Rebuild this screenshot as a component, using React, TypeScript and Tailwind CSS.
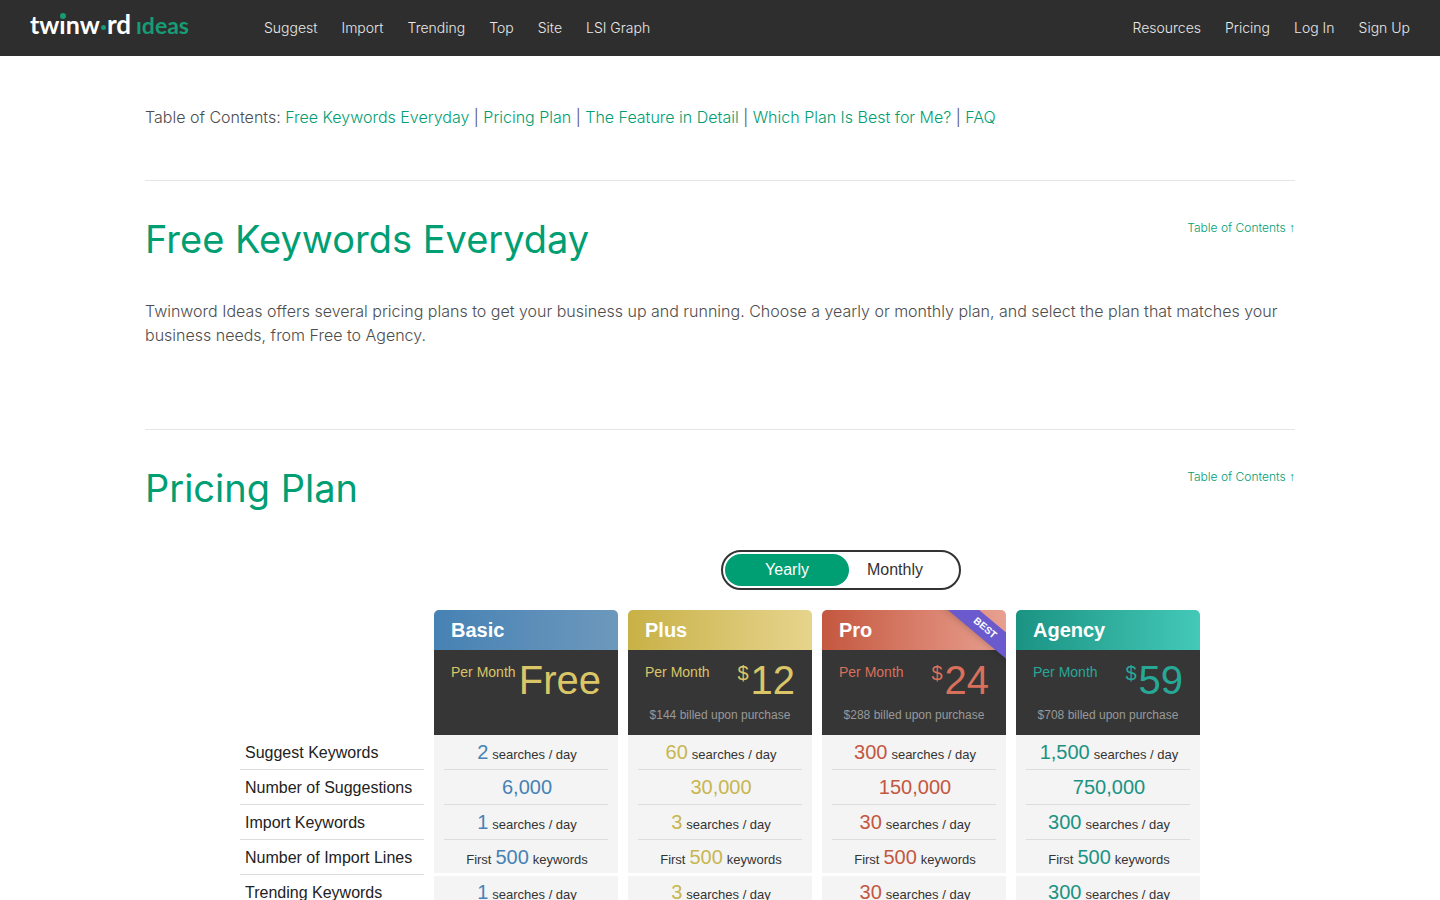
import { useState } from 'react';

type Billing = 'yearly' | 'monthly';

interface Plan {
  name: string;
  price: string;
  yearlyTotal?: string;
  best?: boolean;
  header: string;
  priceColor: string;
  valueColor: string;
}

interface Feature {
  label: string;
  before?: string;
  after?: string;
  values: string[];
  endsGroup?: boolean;
  startsGroup?: boolean;
}

const MAIN_LINKS = ['Suggest', 'Import', 'Trending', 'Top', 'Site', 'LSI Graph'];
const ACCOUNT_LINKS = ['Resources', 'Pricing', 'Log In', 'Sign Up'];

const CONTENTS = [
  { id: 'free', title: 'Free Keywords Everyday' },
  { id: 'pricing', title: 'Pricing Plan' },
  { id: 'features', title: 'The Feature in Detail' },
  { id: 'best-plan', title: 'Which Plan Is Best for Me?' },
  { id: 'faq', title: 'FAQ' },
];

const PLANS: Plan[] = [
  {
    name: 'Basic',
    price: 'Free',
    header: 'bg-linear-to-r from-[#4682b4] to-[#6d98bc]',
    priceColor: 'text-[#dac567]',
    valueColor: 'text-[#4682b4]',
  },
  {
    name: 'Plus',
    price: '12',
    yearlyTotal: '$144',
    header: 'bg-linear-to-r from-[#c8b145] to-[#e7d48c]',
    priceColor: 'text-[#dac567]',
    valueColor: 'text-[#c8b650]',
  },
  {
    name: 'Pro',
    price: '24',
    yearlyTotal: '$288',
    best: true,
    header: 'bg-linear-to-r from-[#c4573f] to-[#e8a090]',
    priceColor: 'text-[#d8705c]',
    valueColor: 'text-[#c4573f]',
  },
  {
    name: 'Agency',
    price: '59',
    yearlyTotal: '$708',
    header: 'bg-linear-to-r from-[#1a9383] to-[#43c9b8]',
    priceColor: 'text-[#27a897]',
    valueColor: 'text-[#1a9383]',
  },
];

const FEATURES: Feature[] = [
  { label: 'Suggest Keywords', after: 'searches / day', values: ['2', '60', '300', '1,500'] },
  { label: 'Number of Suggestions', values: ['6,000', '30,000', '150,000', '750,000'] },
  { label: 'Import Keywords', after: 'searches / day', values: ['1', '3', '30', '300'] },
  { label: 'Number of Import Lines', before: 'First', after: 'keywords', values: ['500', '500', '500', '500'], endsGroup: true },
  { label: 'Trending Keywords', after: 'searches / day', values: ['1', '3', '30', '300'], startsGroup: true },
];

function Logo() {
  return (
    <a href="#" aria-label="Twinword Ideas" className="block">
      <svg width="162" height="48" viewBox="0 -8 162 48" className="font-['Lato',sans-serif]">
        <text x="0" y="22" fontSize="25" fontWeight="700" fill="#ffffff">twınw</text>
        <text x="77" y="22" fontSize="26" fontWeight="700" fill="#ffffff">rd</text>
        <text x="106" y="22" fontSize="23" fontWeight="700" fill="#179b74">ıdeas</text>
        <circle cx="33" cy="4" r="3" fill="#179b74" />
        <circle cx="73.5" cy="15.5" r="2.5" fill="#179b74" />
      </svg>
    </a>
  );
}

function NavLinks({ links }: { links: string[] }) {
  return (
    <ul className="flex gap-6">
      {links.map(link => (
        <li key={link}>
          <a href="#" className="text-[#e8e8e8] hover:text-white">{link}</a>
        </li>
      ))}
    </ul>
  );
}

function SectionHeader({ title }: { title: string }) {
  return (
    <div className="flex items-start justify-between border-t border-[#e5e5e5] pt-[34px]">
      <h2 className="text-[38px] leading-12 font-normal text-[#009e73]">{title}</h2>
      <a href="#contents" className="mt-[3px] text-xs leading-5 text-[#009e73] hover:underline">
        Table of Contents <span className="font-['Liberation_Sans',Arial,sans-serif]">↑</span>
      </a>
    </div>
  );
}

function BillingToggle({ billing, onChange }: { billing: Billing; onChange: (b: Billing) => void }) {
  const option = (value: Billing, label: string, width: string) => (
    <label
      className={`flex h-8 cursor-pointer items-center justify-center rounded-full ${width} ${
        billing === value ? 'bg-[#009e73] text-white' : 'text-[#333333]'
      }`}
    >
      <input
        type="radio"
        name="billing"
        value={value}
        checked={billing === value}
        onChange={() => onChange(value)}
        className="sr-only"
      />
      {label}
    </label>
  );

  return (
    <fieldset className="flex w-60 rounded-full border-2 border-[#333333] p-0.5">
      {option('yearly', 'Yearly', 'w-[124px]')}
      {option('monthly', 'Monthly', 'w-[92px]')}
    </fieldset>
  );
}

function PlanHeader({ plan, billing }: { plan: Plan; billing: Billing }) {
  return (
    <div className="relative overflow-hidden rounded-t-[5px] text-left font-normal">
      <div className={`px-[17px] text-xl leading-10 font-bold text-white ${plan.header}`}>{plan.name}</div>
      <div className={`h-[85px] bg-[#363636] ${plan.priceColor}`}>
        <div className="flex h-14 justify-between px-[17px] pt-2">
          <span className="pt-1 text-sm leading-5 whitespace-nowrap">Per Month</span>
          <span className="flex items-start text-[40px] leading-11">
            {plan.yearlyTotal && <span className="mr-0.5 text-xl leading-[30px]">$</span>}
            {plan.price}
          </span>
        </div>
        {plan.yearlyTotal && billing === 'yearly' && (
          <p className="text-center text-xs leading-[18px] text-[#999999]">{plan.yearlyTotal} billed upon purchase</p>
        )}
      </div>
      {plan.best && (
        <span className="absolute top-2 -right-[34px] w-[110px] rotate-40 bg-[#6a5acd] text-center text-[10px] leading-5 font-bold text-white shadow-md">
          BEST
        </span>
      )}
    </div>
  );
}

function PricingTable({ billing }: { billing: Billing }) {
  // rows around a group break give up their divider for a white gap
  const cellLine = (feature: Feature) => {
    if (feature.endsGroup) return 'h-[33px] leading-[34px]';
    if (feature.startsGroup) return 'h-[34px] leading-8';
    return 'border-b border-[#dddddd] leading-[34px]';
  };

  return (
    <table className="mx-auto w-full max-w-[980px] table-fixed border-separate border-spacing-x-2.5 border-spacing-y-0">
      <thead>
        <tr>
          <td />
          {PLANS.map(plan => (
            <th key={plan.name} scope="col" className="p-0">
              <PlanHeader plan={plan} billing={billing} />
            </th>
          ))}
        </tr>
      </thead>
      <tbody>
        {FEATURES.map(feature => (
          <tr key={feature.label} className="h-[35px]">
            <th scope="row" className="border-b border-[#dddddd] p-0 pt-0.5 pl-[5px] text-left leading-8 font-normal whitespace-nowrap text-[#222222]">
              {feature.label}
            </th>
            {PLANS.map((plan, i) => (
              <td
                key={plan.name}
                className={`border-white bg-[#f4f4f4] px-2.5 py-0 text-[13px] text-[#333333] ${
                  feature.endsGroup ? 'border-b-2' : ''
                } ${feature.startsGroup ? 'border-t' : ''}`}
              >
                <div className={`flex items-baseline justify-center gap-1 pl-0.5 whitespace-nowrap ${cellLine(feature)}`}>
                  {feature.before && <span className="leading-none">{feature.before}</span>}
                  <span className={`text-xl leading-[inherit] ${plan.valueColor}`}>{feature.values[i]}</span>
                  {feature.after && <span className="leading-none">{feature.after}</span>}
                </div>
              </td>
            ))}
          </tr>
        ))}
      </tbody>
    </table>
  );
}

export default function App() {
  const [billing, setBilling] = useState<Billing>('yearly');

  return (
    <div className="min-h-screen bg-white font-['Inter',sans-serif] text-base leading-6 font-light text-[#4d4d4d]">
      <header className="flex h-14 items-center bg-[#2e2e2e] px-[30px]">
        <Logo />
        <nav className="ml-[72px] flex flex-1 justify-between text-sm">
          <NavLinks links={MAIN_LINKS} />
          <NavLinks links={ACCOUNT_LINKS} />
        </nav>
      </header>

      <main className="mx-auto max-w-[1150px]">
        <p id="contents" className="pt-[49px] pb-[51px]">
          Table of Contents:{' '}
          {CONTENTS.map((item, i) => (
            <span key={item.id}>
              {i > 0 && ' | '}
              <a href={`#${item.id}`} className="text-[#009e73] hover:underline">{item.title}</a>
            </span>
          ))}
        </p>

        <section id="free">
          <SectionHeader title="Free Keywords Everyday" />
          <p className="pt-9 pb-[82px]">
            Twinword Ideas offers several pricing plans to get your business up and running. Choose a yearly or
            monthly plan, and select the plan that matches your business needs, from Free to Agency.
          </p>
        </section>

        <section id="pricing">
          <SectionHeader title="Pricing Plan" />
          <div className="font-['Liberation_Sans',Arial,sans-serif] font-normal">
            <div className="flex justify-center pt-[38px] pb-5 pl-[242px]">
              <BillingToggle billing={billing} onChange={setBilling} />
            </div>
            <PricingTable billing={billing} />
          </div>
        </section>
      </main>
    </div>
  );
}
